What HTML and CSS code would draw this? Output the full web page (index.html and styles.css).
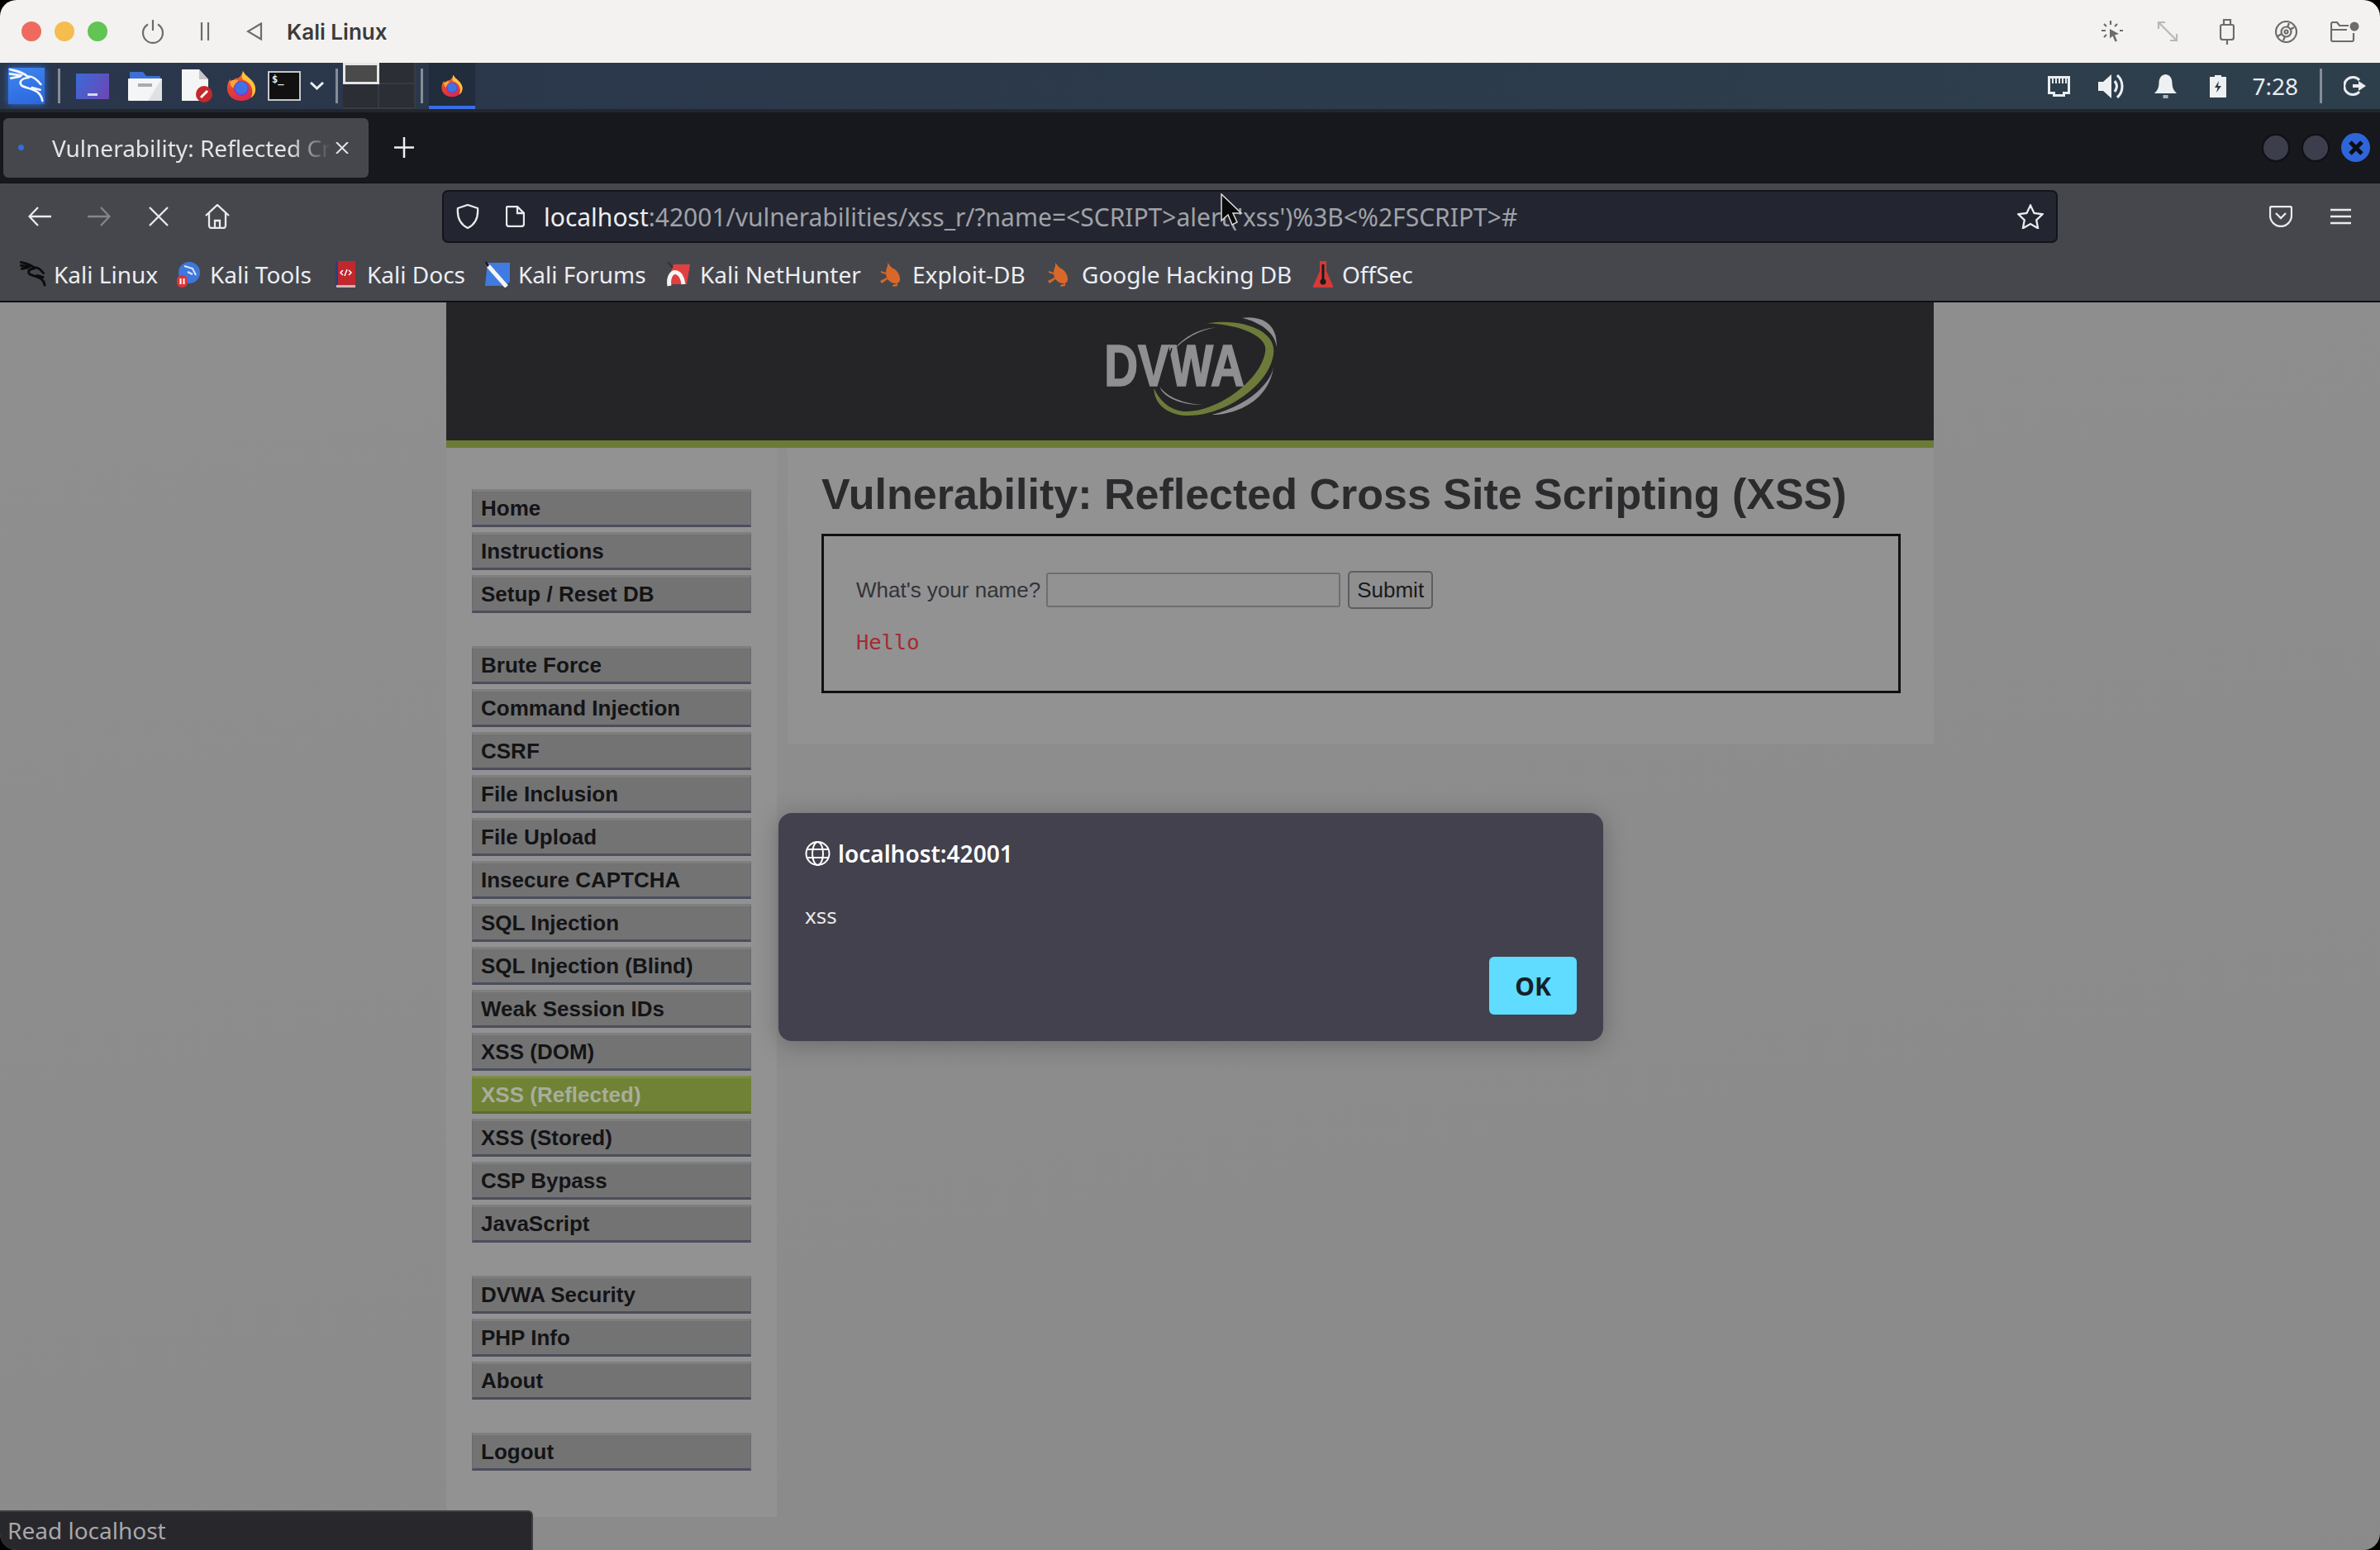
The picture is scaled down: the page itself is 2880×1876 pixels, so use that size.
FILE: index.html
```html
<!DOCTYPE html>
<html lang="en">
<head>
    <meta charset="UTF-8">
    <title>Vulnerability: Reflected Cross Site Scripting (XSS)</title>
    <link rel="stylesheet" href="styles.css">
</head>
<body>
<svg class="defs" width="0" height="0">
    <defs>
        <linearGradient id="foxBody" x1="0" y1="0" x2="0.3" y2="1">
            <stop offset="0" stop-color="#f58a2a"/>
            <stop offset="0.55" stop-color="#e8452f"/>
            <stop offset="1" stop-color="#d92d4a"/>
        </linearGradient>
        <symbol id="firefox" viewBox="0 0 40 40">
            <path fill="url(#foxBody)" d="M22 1c2 4 5 6 8 9 5 4 8 9 8 14 0 9-8 15-18 15S2 33 2 23c0-4 1-8 4-12 0 3 1 4 2 5 1-4 4-6 8-6 3-2 5-5 6-9z"/>
            <path fill="#fbc23b" d="M22 1c2 4 5 6 8 9 5 4 8 9 8 14 0 5-2 9-6 11 2-3 2-6 2-8 0-7-5-12-10-14-2-1-4-3-3-6 0-2 1-4 1-6z"/>
            <path fill="#f9a33a" d="M6 14c3-2 7-2 10-1l-3 5c-2 1-3 3-3 5-3-2-5-5-4-9z"/>
            <circle cx="20" cy="23" r="9.5" fill="#7a3fc2"/>
            <circle cx="20" cy="22.5" r="8" fill="#3f73e4"/>
        </symbol>
        <symbol id="dragon" viewBox="30 36 132 132">
            <path fill="none" stroke-linecap="round" stroke-linejoin="round" d="M36 42c25 6 48 10 64 26 18-4 32 8 48 28M36 58l42 6M40 74l32-6M104 72c-26 2-38 16-24 30 24 12 66 10 74 54M116 108l30 8"/>
        </symbol>
        <symbol id="bug" viewBox="0 0 28 32">
            <path fill="#d8682a" d="M10 2l5 6c6 2 10 8 10 14 0 3-2 5-5 5-7 0-12-6-12-12 0-4 1-7 2-9zM2 12l6 2v2l-6-2zM1 24l8-4 1 2-7 5zM16 29l6-2v3l-5 1z"/>
        </symbol>
    </defs>
</svg>

<div class="window">
    <!-- vm host title bar -->
    <div class="titlebar">
        <span class="light light-red"></span>
        <span class="light light-yellow"></span>
        <span class="light light-green"></span>
        <svg class="tb-ic ic-power" width="28" height="30" viewBox="0 0 28 30"><path d="M14 1v13M8 6.5a12 12 0 1 0 12 0"/></svg>
        <svg class="tb-ic ic-pause" width="12" height="22" viewBox="0 0 12 22"><path d="M2 0v22M10 0v22"/></svg>
        <svg class="tb-ic ic-prev" width="20" height="22" viewBox="0 0 20 22"><path d="M18 1.5v19L2 11z"/></svg>
        <span class="vm-name">Kali Linux</span>
        <svg class="tb-ic ic-click" width="28" height="28" viewBox="0 0 28 28"><path d="M13 1v5M2 13h5M24 13h4M5 5l3 3M21 5l-3 3M5 21l3-3"/><path class="solid" d="M12 11l11 6-5 1.500 3 7-2.500 1-3-7-3.500 3z"/></svg>
        <svg class="tb-ic ic-grow" width="26" height="26" viewBox="0 0 26 26"><path d="M2 10V2h8M2 2l22 22M16 24h8v-8"/></svg>
        <svg class="tb-ic ic-usb" width="18" height="31" viewBox="0 0 18 31"><path d="M5 7V1h8v6M3 7h12a2 2 0 0 1 2 2v13a3 3 0 0 1-3 3H4a3 3 0 0 1-3-3V9a2 2 0 0 1 2-2zM9 25v6"/></svg>
        <svg class="tb-ic ic-disc" width="27" height="27" viewBox="0 0 27 27"><circle cx="13.500" cy="13.500" r="12.500"/><circle cx="13.500" cy="13.500" r="6"/><circle cx="13.500" cy="13.500" r="2"/><path d="M17 3l-2 5M23 8l-5 3M3 19l5-3M10 24l2-5"/></svg>
        <svg class="tb-ic ic-share" width="35" height="25" viewBox="0 0 35 25"><path d="M22 5H11L8 1H3a2 2 0 0 0-2 2v19a2 2 0 0 0 2 2h23a2 2 0 0 0 2-2v-8M1 10h19"/><circle class="solid" cx="29" cy="6" r="5.500"/></svg>
    </div>

    <!-- xfce panel inside the vm -->
    <div class="panel">
        <span class="menu-btn"><svg class="dragon-white" width="44" height="44"><use href="#dragon"/></svg></span>
        <span class="p-sep p-sep-a"></span>
        <span class="desk-ic"><i></i></span>
        <svg class="p-files" width="41" height="36" viewBox="0 0 41 36"><path fill="#3d6fd8" d="M2 1h16l4 5h17v8H2z"/><rect y="9" width="41" height="27" rx="1" fill="#f4f5f6"/><path fill="#dfe1e3" d="M41 9v27H24z"/><rect x="12" y="15" width="17" height="4" fill="#a9abae"/></svg>
        <svg class="p-doc" width="37" height="40" viewBox="0 0 37 40"><path fill="#f5f5f5" d="M0 0h21l11 12v26H0z"/><path fill="#c4c6c8" d="M21 0l11 12H21z"/><circle cx="27" cy="30" r="10" fill="#c4282c"/><path stroke="#fff" stroke-width="3" d="M23 34l8-8"/></svg>
        <svg class="p-fox" width="38" height="40"><use href="#firefox"/></svg>
        <span class="term-ic">$_</span>
        <svg class="p-chev" width="17" height="10" viewBox="0 0 17 10"><path fill="none" stroke="#eceff1" stroke-width="3" d="M1 1l7.500 7L16 1"/></svg>
        <span class="p-sep p-sep-b"></span>
        <div class="pager">
            <span class="pager-cell pager-on"></span>
            <span class="pager-cell"></span>
            <span class="pager-cell"></span>
            <span class="pager-cell"></span>
        </div>
        <span class="p-sep p-sep-c"></span>
        <span class="task"><svg width="28" height="28"><use href="#firefox"/></svg></span>

        <svg class="p-net" width="27" height="25" viewBox="0 0 27 25"><path fill="none" stroke="#e9edf0" stroke-width="3" d="M1.500 1.500h24v19h-6v3h-12v-3h-6z"/><path stroke="#e9edf0" stroke-width="2" d="M6 3v6M10 3v6M14 3v6M18 3v6M22 3v6"/></svg>
        <svg class="p-vol" width="32" height="29" viewBox="0 0 32 29"><path fill="#eef1f3" d="M0 9h6l10-9v29L6 20H0z"/><path fill="none" stroke="#eef1f3" stroke-width="3" d="M20 8c3 4 3 9 0 13M23 1c8 7 8 20 0 27"/></svg>
        <svg class="p-bell" width="27" height="29" viewBox="0 0 27 29"><path fill="#eef1f3" d="M13.500 0c6 1 8 5 8 11 0 5 2 9 5.500 12H0c3.500-3 5.500-7 5.500-12 0-6 2-10 8-11z"/><rect x="10.500" y="25" width="6" height="4" fill="#aeb4b8"/></svg>
        <svg class="p-bat" width="20" height="27" viewBox="0 0 20 27"><path fill="#eef1f3" d="M6 0h8v2h6v25H0V2h6z"/><path fill="#2c3c4a" d="M11 7l-5 8h3.500L8 21l6-8h-4z"/></svg>
        <span class="clock">7:28</span>
        <span class="p-sep p-sep-d"></span>
        <svg class="p-out" width="27" height="24" viewBox="0 0 27 24"><path fill="none" stroke="#e9edf0" stroke-width="3" d="M19 5a10.500 10.500 0 1 0 0 14"/><path fill="#e9edf0" d="M11 10h7V6l9 6-9 6v-4h-7z"/></svg>
    </div>

    <!-- firefox -->
    <div class="tabstrip">
        <div class="tab">
            <span class="tab-dot"></span>
            <span class="tab-title">Vulnerability: Reflected Cr</span>
            <svg class="tab-x" width="16" height="14" viewBox="0 0 16 14"><path d="M1 0l14 14M15 0L1 14"/></svg>
        </div>
        <svg class="tab-new" width="24" height="25" viewBox="0 0 24 25"><path d="M12 0v25M0 12.500h24"/></svg>
        <span class="wm-btn wm-btn-first"></span>
        <span class="wm-btn"></span>
        <span class="wm-close"><svg width="18" height="18" viewBox="0 0 18 18"><path d="M2 2l14 14M16 2L2 16"/></svg></span>
    </div>

    <div class="chrome">
        <div class="navrow">
            <svg class="nv nv-back" width="28" height="24" viewBox="0 0 28 24"><path d="M28 12H2M12 1L1.500 12 12 23"/></svg>
            <svg class="nv nv-fwd" width="28" height="24" viewBox="0 0 28 24"><path d="M0 12h26M16 1l10.500 11L16 23"/></svg>
            <svg class="nv nv-stop" width="24" height="24" viewBox="0 0 24 24"><path d="M1 1l22 22M23 1L1 23"/></svg>
            <svg class="nv nv-home" width="30" height="30" viewBox="0 0 30 30"><path d="M1 14L15 1l14 13M5 11v15a3 3 0 0 0 3 3h14a3 3 0 0 0 3-3V11M12 29v-9h6v9"/></svg>
            <div class="urlbar">
                <svg class="nv ub-shield" width="28" height="30" viewBox="0 0 28 30"><path d="M14 1l12 4c1 11-2 19-12 24C4 24 1 16 2 5z"/></svg>
                <svg class="nv ub-page" width="23" height="26" viewBox="0 0 23 26"><path d="M2 1h12l8 8v13a3 3 0 0 1-3 3H4a3 3 0 0 1-3-3V2zM14 1v8h8"/></svg>
                <span class="url"><b>localhost</b>:42001/vulnerabilities/xss_r/?name=&lt;SCRIPT&gt;alert('xss')%3B&lt;%2FSCRIPT&gt;#</span>
                <svg class="nv ub-star" width="32" height="30" viewBox="0 0 32 30"><path d="M16 1.500l4.500 9.500 10 1.300-7.300 7 1.900 10L16 24l-9.100 5.300 1.900-10-7.300-7 10-1.300z"/></svg>
            </div>
            <svg class="nv nv-pocket" width="28" height="26" viewBox="0 0 28 26"><path d="M3 1h22a2 2 0 0 1 2 2v9c0 7-6 13-13 13S1 19 1 12V3a2 2 0 0 1 2-2zM8 9l6 6 6-6"/></svg>
            <svg class="nv nv-menu" width="25" height="20" viewBox="0 0 25 20"><path d="M0 2h25M0 10h25M0 18h25"/></svg>
        </div>
        <div class="bookmarks">
            <span class="bm bm-1"><svg class="dragon-black" width="32" height="32"><use href="#dragon"/></svg>Kali Linux</span>
            <span class="bm bm-2"><svg width="29" height="32" viewBox="0 0 29 32"><circle cx="16" cy="14" r="13" fill="#3f78dc"/><path fill="none" stroke="#dfe8f8" stroke-width="2" d="M10 6l10 3 4 8M14 13l6 3"/><rect x="1" y="17" width="13" height="15" rx="6" fill="#d8353a"/><path stroke="#fff" stroke-width="2" d="M5.500 21v7M9.500 21v7"/></svg>Kali Tools</span>
            <span class="bm bm-3"><svg width="24" height="32" viewBox="0 0 24 32"><rect x="2" width="22" height="29" fill="#c1272d"/><rect width="3" height="29" fill="#2a3f7a"/><rect y="29" x="1" width="23" height="3" fill="#c9b9b9"/><path fill="none" stroke="#fff" stroke-width="1.500" d="M9 11l-3 3 3 3M16 11l3 3-3 3M14 10l-3 8"/></svg>Kali Docs</span>
            <span class="bm bm-4"><svg width="32" height="32" viewBox="0 0 32 32"><path fill="#3f7be0" d="M5 2h27v23l-6 5H2z"/><path stroke="#111" stroke-width="2" d="M3 1l4 7"/><path stroke="#f5f5f5" stroke-width="5" d="M6 6l22 25"/></svg>Kali Forums</span>
            <span class="bm bm-5"><svg width="30" height="32" viewBox="0 0 30 32"><path fill="#e04040" d="M10 4h20l-4 24H2z"/><path fill="none" stroke="#f5f5f5" stroke-width="5" d="M5 30c-2-12 4-18 9-16 4 1 7 7 8 14"/><path stroke="#333" stroke-width="2" d="M3 1l6 7"/></svg>Kali NetHunter</span>
            <span class="bm bm-6"><svg width="28" height="32"><use href="#bug"/></svg>Exploit-DB</span>
            <span class="bm bm-7"><svg width="28" height="32"><use href="#bug"/></svg>Google Hacking DB</span>
            <span class="bm bm-8"><svg width="26" height="32" viewBox="0 0 26 32"><path fill="#d33a38" d="M9 0h8v12l8 18v2H1v-2l8-18z"/><path stroke="#1a1a1a" stroke-width="3" d="M13 4v20"/><circle cx="13" cy="25" r="3.500" fill="#1a1a1a"/></svg>OffSec</span>
        </div>
    </div>

    <!-- dimmed page -->
    <div class="page">
        <div class="dvwa">
            <div class="dvwa-head">
                <svg class="logo" width="220" height="130" viewBox="400 60 660 390">
                    <path fill="#8f8f92" d="M910 80c80-10 130 30 125 105-5-50-60-90-125-105z"/>
                    <path fill="#6c7b3a" d="M780 100c120-20 245 20 245 100-5 120-180 240-320 235-70-5-115-45-115-100 20 45 60 85 120 85 130-5 280-130 285-225 0-50-90-90-215-95z"/>
                    <path fill="#8f8f92" d="M800 432c100 0 215-60 225-182-5 70-100 150-225 182z"/>
                    <path fill="#8f8f92" d="M815 115c-60 10-115 40-155 85 30-45 90-80 155-85zM612 330c20 35 90 65 158 65-70 5-150-25-158-65z"/>
                    <text class="logo-text" x="410" y="327" textLength="508" lengthAdjust="spacingAndGlyphs">DVWA</text>
                    <path fill="none" stroke="#252527" stroke-width="5" d="M655 190L612 325"/>
                </svg>
            </div>
            <div class="dvwa-body">
                <div class="sidebar">
                    <ul class="menu">
                        <li>Home</li>
                        <li>Instructions</li>
                        <li>Setup / Reset DB</li>
                    </ul>
                    <ul class="menu">
                        <li>Brute Force</li>
                        <li>Command Injection</li>
                        <li>CSRF</li>
                        <li>File Inclusion</li>
                        <li>File Upload</li>
                        <li>Insecure CAPTCHA</li>
                        <li>SQL Injection</li>
                        <li>SQL Injection (Blind)</li>
                        <li>Weak Session IDs</li>
                        <li>XSS (DOM)</li>
                        <li class="selected">XSS (Reflected)</li>
                        <li>XSS (Stored)</li>
                        <li>CSP Bypass</li>
                        <li>JavaScript</li>
                    </ul>
                    <ul class="menu">
                        <li>DVWA Security</li>
                        <li>PHP Info</li>
                        <li>About</li>
                    </ul>
                    <ul class="menu">
                        <li>Logout</li>
                    </ul>
                </div>
                <div class="main">
                    <h1>Vulnerability: Reflected Cross Site Scripting (XSS)</h1>
                    <div class="vulnerable">
                        <form class="xss-form">
                            <label>What's your name?</label>
                            <input type="text" class="xss-input">
                            <button type="button" class="xss-submit">Submit</button>
                        </form>
                        <pre class="hello">Hello</pre>
                    </div>
                </div>
            </div>
        </div>

        <div class="dialog">
            <div class="dialog-title">
                <svg class="globe" width="31" height="30" viewBox="0 0 31 30"><circle cx="15.500" cy="15" r="14"/><ellipse cx="15.500" cy="15" rx="6.500" ry="14"/><path d="M2 10h27M2 20h27"/></svg>
                localhost:42001
            </div>
            <div class="dialog-msg">xss</div>
            <div class="dialog-foot"><button type="button" class="dialog-ok">OK</button></div>
        </div>

        <div class="statusbar">Read localhost</div>
    </div>

    <svg class="cursor" width="28" height="42" viewBox="0 0 28 42"><path d="M2 1v32l8-7 5 12 6-3-5-11h10z"/></svg>
</div>
</body>
</html>
```

FILE: styles.css
```css
* {
    box-sizing: border-box;
}
html, body {
    margin: 0;
    padding: 0;
    background-color: #000;
}
.defs {
    position: absolute;
}
.window {
    position: relative;
    width: 2880px;
    height: 1876px;
    border-radius: 20px;
    overflow: hidden;
    display: flex;
    flex-direction: column;
    font-family: "Noto Sans", sans-serif;
}

/* host title bar */
.titlebar {
    height: 76px;
    background-color: #f3f2f0;
    display: flex;
    align-items: center;
    flex: none;
}
.light {
    width: 24px;
    height: 24px;
    border-radius: 50%;
    margin-left: 16px;
}
.light-red {
    background-color: #ee6a5f;
    margin-left: 26px;
}
.light-yellow {
    background-color: #f5bd4f;
}
.light-green {
    background-color: #61c454;
}
.tb-ic {
    fill: none;
    stroke: #6c6c6c;
    stroke-width: 2.200;
    flex: none;
}
.tb-ic .solid {
    fill: #6c6c6c;
    stroke: none;
}
.ic-power {
    margin-left: 41px;
}
.ic-pause {
    margin-left: 43px;
}
.ic-prev {
    margin-left: 44px;
}
.vm-name {
    margin-left: 29px;
    font-family: "Inter", sans-serif;
    font-weight: 600;
    font-size: 26px;
    color: #3b3b3b;
}
.ic-click {
    margin-left: auto;
    margin-right: -2px;
}
.ic-grow {
    margin-left: 43px;
    stroke: #b8b8b8;
}
.ic-usb {
    margin-left: 50px;
}
.ic-disc {
    margin-left: 49px;
}
.ic-share {
    margin-left: 40px;
    margin-right: 25px;
}

/* kali panel */
.panel {
    height: 56px;
    flex: none;
    display: flex;
    align-items: center;
    background: linear-gradient(90deg, #2a364b, #2e3f4c);
}
.menu-btn {
    width: 44px;
    height: 44px;
    margin-left: 10px;
    background: linear-gradient(160deg, #3f86f0, #2a66dc);
    box-shadow: 0 0 8px #2f6fe0;
    flex: none;
    display: flex;
}
.dragon-white {
    stroke: #f2f6fc;
    stroke-width: 8;
}
.dragon-black {
    stroke: #0c0c0c;
    stroke-width: 12;
}
.p-sep {
    width: 3px;
    height: 42px;
    background-color: #858d96;
    flex: none;
}
.p-sep-a {
    margin-left: 16px;
}
.desk-ic {
    width: 40px;
    height: 31px;
    margin-left: 19px;
    background: linear-gradient(120deg, #3a6bd8, #6e45b4);
    display: flex;
    justify-content: center;
    align-items: flex-end;
    flex: none;
}
.desk-ic i {
    width: 12px;
    height: 3px;
    margin-bottom: 4px;
    background-color: #d6d8ea;
}
.p-files {
    margin-left: 23px;
    flex: none;
}
.p-doc {
    margin-left: 24px;
    flex: none;
}
.p-fox {
    margin-left: 16px;
    flex: none;
}
.term-ic {
    width: 40px;
    height: 36px;
    margin-left: 13px;
    padding-left: 3px;
    background-color: #111;
    border: 2px solid #c6c8ca;
    color: #eee;
    font: bold 12px/16px "DejaVu Sans Mono", monospace;
    flex: none;
}
.p-chev {
    margin-left: 11px;
    flex: none;
}
.p-sep-b {
    margin-left: 14px;
}
.pager {
    width: 88px;
    height: 56px;
    margin-left: 6px;
    display: grid;
    grid-template-columns: 44px 44px;
    grid-template-rows: 26px 30px;
    background-color: #2c2e36;
    flex: none;
}
.pager-cell {
    border-right: 2px solid #383a44;
    border-bottom: 2px solid #383a44;
}
.pager-on {
    background-color: #4a4a4a;
    border: 3px solid #e6e6e6;
}
.p-sep-c {
    margin-left: 6px;
}
.task {
    width: 56px;
    height: 56px;
    margin-left: 7px;
    padding-top: 14px;
    background-color: #212c3c;
    border-bottom: 4px solid #3a6ee8;
    display: flex;
    justify-content: center;
    flex: none;
}
.p-net {
    margin-left: auto;
    flex: none;
}
.p-vol {
    margin-left: 34px;
    flex: none;
}
.p-bell {
    margin-left: 36px;
    flex: none;
}
.p-bat {
    margin-left: 40px;
    flex: none;
}
.clock {
    margin-left: 31px;
    color: #e6ecf2;
    font-size: 28px;
}
.p-sep-d {
    margin-left: 26px;
}
.p-out {
    margin-left: 26px;
    margin-right: 17px;
    flex: none;
}

/* tab strip */
.tabstrip {
    height: 90px;
    flex: none;
    display: flex;
    align-items: center;
    background-color: #17181d;
    border-top: 4px solid #22262d;
    border-bottom: 1px solid #101114;
}
.tab {
    width: 442px;
    height: 72px;
    margin-left: 4px;
    border-radius: 6px;
    background-color: #46474d;
    display: flex;
    align-items: center;
    flex: none;
}
.tab-dot {
    width: 7px;
    height: 7px;
    margin-left: 18px;
    border-radius: 50%;
    background-color: #2f6fe0;
    flex: none;
}
.tab-title {
    width: 338px;
    margin-left: 34px;
    white-space: nowrap;
    color: #e4e4e6;
    font-size: 28px;
    -webkit-mask-image: linear-gradient(90deg, #000 85%, transparent 100%);
    mask-image: linear-gradient(90deg, #000 85%, transparent 100%);
    flex: none;
}
.tab-x {
    margin-left: 5px;
    stroke: #e4e4e6;
    stroke-width: 2;
    flex: none;
}
.tab-new {
    margin-left: 31px;
    stroke: #f0f0f0;
    stroke-width: 2.500;
    flex: none;
}
.wm-btn {
    width: 34px;
    height: 34px;
    margin-left: 14px;
    border-radius: 50%;
    background-color: #3c3e4b;
    border: 2px solid #0f1014;
    flex: none;
}
.wm-btn-first {
    margin-left: auto;
}
.wm-close {
    width: 35px;
    height: 35px;
    margin-left: 14px;
    margin-right: 12px;
    border-radius: 50%;
    background-color: #2f65d8;
    display: flex;
    align-items: center;
    justify-content: center;
    flex: none;
}
.wm-close path {
    stroke: #0c0e14;
    stroke-width: 5;
}

/* firefox toolbar */
.chrome {
    height: 144px;
    flex: none;
    background-color: #46474d;
    border-bottom: 2px solid #0e0f12;
}
.navrow {
    height: 78px;
    display: flex;
    align-items: center;
    padding-top: 2px;
}
.nv {
    fill: none;
    stroke: #eaeaec;
    stroke-width: 2.300;
    flex: none;
}
.nv-back {
    margin-left: 34px;
}
.nv-fwd {
    margin-left: 44px;
    stroke: #85868a;
}
.nv-stop {
    margin-left: 46px;
}
.nv-home {
    margin-left: 44px;
}
.urlbar {
    width: 1955px;
    height: 64px;
    margin-left: 257px;
    padding-left: 15px;
    border: 2px solid #131419;
    border-radius: 7px;
    background-color: #232631;
    display: flex;
    align-items: center;
    flex: none;
}
.ub-page {
    margin-left: 32px;
}
.url {
    margin-left: 23px;
    color: #a0a2a8;
    font-size: 30px;
    white-space: nowrap;
}
.url b {
    font-weight: 400;
    color: #eceef2;
}
.ub-star {
    margin-left: auto;
    margin-right: 15px;
}
.nv-pocket {
    margin-left: 256px;
}
.nv-menu {
    margin-left: 46px;
}
.bookmarks {
    height: 64px;
    display: flex;
    align-items: center;
    padding-left: 24px;
}
.bm {
    display: flex;
    align-items: center;
    color: #eceef2;
    font-size: 28px;
    white-space: nowrap;
    flex: none;
}
.bm svg {
    flex: none;
}
.bm-1 {
    width: 189px;
    gap: 9px;
}
.bm-2 {
    width: 193px;
    gap: 12px;
}
.bm-3 {
    width: 179px;
    gap: 14px;
}
.bm-4 {
    width: 220px;
    gap: 10px;
}
.bm-5 {
    width: 259px;
    gap: 12px;
}
.bm-6 {
    width: 203px;
    gap: 12px;
}
.bm-7 {
    width: 321px;
    gap: 14px;
}
.bm-8 {
    gap: 10px;
}

/* dimmed DVWA page */
.page {
    position: relative;
    flex: 1;
    background: linear-gradient(170deg, #8f8f90, #8a8a8b);
    overflow: hidden;
}
.dvwa {
    width: 1800px;
    margin-left: 540px;
    font-family: "Liberation Sans", Arial, sans-serif;
}
.dvwa-head {
    height: 176px;
    background-color: #252527;
    border-bottom: 9px solid #6b7a35;
    display: flex;
    justify-content: center;
    padding: 12px 0 0 6px;
}
.logo-text {
    font-family: "Liberation Sans", Arial, sans-serif;
    font-weight: bold;
    font-size: 212px;
    fill: #8f8f92;
    stroke: #8f8f92;
    stroke-width: 5;
}
.dvwa-body {
    display: flex;
    align-items: flex-start;
}
.sidebar {
    width: 400px;
    height: 1294px;
    padding: 50px 31px 0;
    background-color: #929293;
    flex: none;
}
.menu {
    list-style: none;
    margin: 0 0 40px;
    padding: 0;
    display: flex;
    flex-direction: column;
    gap: 6px;
}
.menu li {
    height: 46px;
    padding-left: 10px;
    background-color: #737374;
    border-top: 3px solid #7f7f80;
    border-bottom: 3px solid #4c4e5c;
    border-left: 1px solid #6a6b74;
    border-right: 1px solid #6a6b74;
    color: #141416;
    font-weight: bold;
    font-size: 26px;
    line-height: 40px;
}
.menu .selected {
    background-color: #6f8236;
    border-top-color: #7c8d4c;
    border-bottom-color: #5c6b2e;
    border-left-color: #6f8236;
    border-right-color: #6f8236;
    color: #a9ad9b;
}
.main {
    width: 1387px;
    height: 358px;
    margin-left: 13px;
    padding: 0 40px 0 41px;
    background-color: #929293;
}
h1 {
    margin: 0;
    height: 104px;
    padding-top: 26px;
    color: #2b2b2d;
    font-size: 52px;
    line-height: 60px;
    font-weight: bold;
    white-space: nowrap;
}
.vulnerable {
    height: 193px;
    padding: 42px 39px 0;
    border: 3px solid #111;
}
.xss-form {
    display: flex;
    align-items: center;
}
.xss-form label {
    color: #33343a;
    font-size: 26px;
}
.xss-input {
    width: 356px;
    height: 42px;
    margin-left: 7px;
    background-color: #929293;
    border: 2px solid #6e6e70;
    border-radius: 3px;
}
.xss-submit {
    width: 103px;
    height: 46px;
    margin-left: 9px;
    padding: 0;
    background-color: #8f8f90;
    border: 2px solid #5e5e60;
    border-radius: 5px;
    color: #1a1a1a;
    font-family: "Liberation Sans", Arial, sans-serif;
    font-size: 26px;
}
.hello {
    margin: 24px 0 0;
    color: #a52a30;
    font-family: "DejaVu Sans Mono", monospace;
    font-size: 25.400px;
    line-height: 32px;
}

/* alert dialog */
.dialog {
    position: absolute;
    left: 942px;
    top: 618px;
    width: 998px;
    height: 276px;
    padding: 30px 32px;
    border-radius: 16px;
    background-color: #43414d;
    box-shadow: 0 4px 30px rgba(0, 0, 0, 0.25);
    color: #fff;
    display: flex;
    flex-direction: column;
}
.dialog-title {
    display: flex;
    align-items: center;
    gap: 9px;
    font-size: 28px;
    font-weight: 600;
    line-height: 38px;
}
.globe {
    fill: none;
    stroke: #fff;
    stroke-width: 2;
    flex: none;
}
.dialog-msg {
    margin-top: 38px;
    color: #e8e8ea;
    font-size: 26px;
    line-height: 36px;
}
.dialog-foot {
    display: flex;
    justify-content: flex-end;
    margin-top: auto;
}
.dialog-ok {
    width: 106px;
    height: 70px;
    margin-bottom: 2px;
    padding: 0;
    border: none;
    border-radius: 6px;
    background-color: #5fdcff;
    color: #15202b;
    font-family: "Noto Sans", sans-serif;
    font-size: 30px;
    font-weight: 700;
}

/* status panel */
.statusbar {
    position: absolute;
    left: 0;
    bottom: 0;
    width: 645px;
    height: 48px;
    padding-left: 9px;
    background-color: #28272c;
    border-top: 2px solid #3e3d42;
    border-right: 2px solid #3e3d42;
    border-top-right-radius: 6px;
    color: #a8a8aa;
    font-size: 28px;
    line-height: 44px;
}

/* mouse pointer */
.cursor {
    position: absolute;
    left: 1476px;
    top: 234px;
}
.cursor path {
    fill: #0a0a0a;
    stroke: #dcdcdc;
    stroke-width: 1.500;
}
```
